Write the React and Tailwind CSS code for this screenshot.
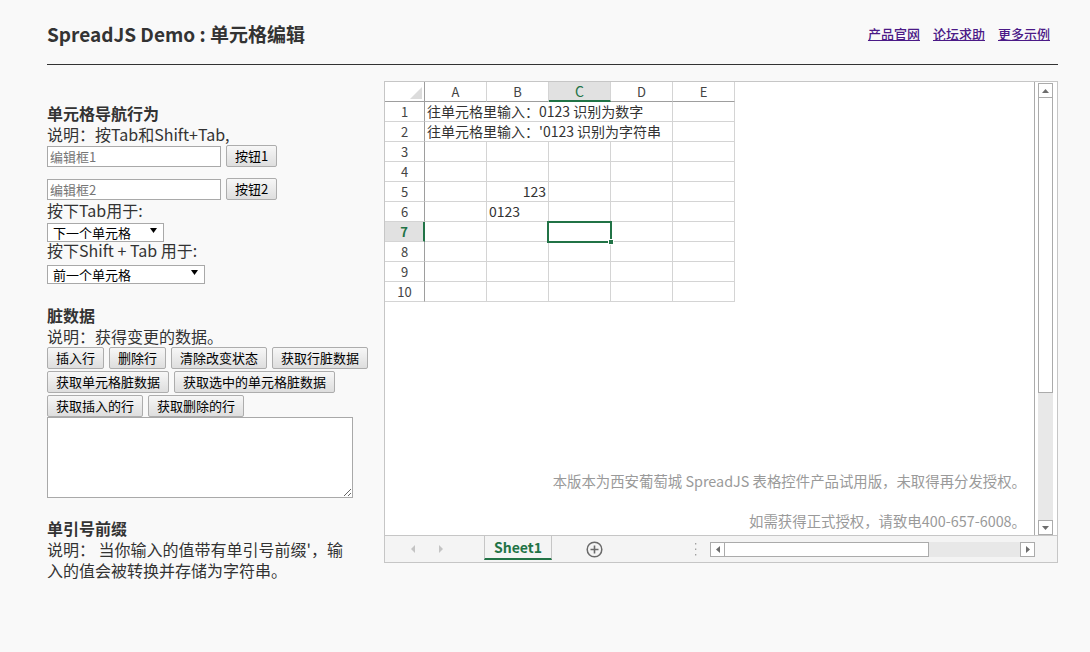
import React from 'react';

const COLS = ['A', 'B', 'C', 'D', 'E'];
const ROWS = [1, 2, 3, 4, 5, 6, 7, 8, 9, 10];

const Tri = ({ dir, color = '#6d6d6d', w = 7, h = 4 }) => {
    // small solid arrow used by scrollbars and selects
    const pts = {
        up: `0,${h} ${w / 2},0 ${w},${h}`,
        down: `0,0 ${w},0 ${w / 2},${h}`,
        left: `${h},0 ${h},${w} 0,${w / 2}`,
        right: `0,0 ${h},${w / 2} 0,${w}`,
    }[dir];
    const vw = dir === 'left' || dir === 'right' ? h : w;
    const vh = dir === 'left' || dir === 'right' ? w : h;
    return (
        <svg width={vw} height={vh} viewBox={`0 0 ${vw} ${vh}`}>
            <polygon points={pts} fill={color} />
        </svg>
    );
};

const Btn = ({ children }) => (
    <button className="h-[22px] px-[8px] border border-[#adadad] rounded-[2px] bg-linear-to-b from-[#f7f7f7] to-[#dedede] text-[13px] leading-[16px] text-black whitespace-nowrap">
        {children}
    </button>
);

const Select = ({ width, label }) => (
    <div className={`relative ${width} h-[19px]`}>
        <select className="appearance-none w-full h-full border border-[#a9a9a9] bg-white pl-[5px] text-[13px] leading-[17px] text-black outline-none">
            <option>{label}</option>
        </select>
        <span className="absolute right-[7px] top-[7px] pointer-events-none">
            <Tri dir="down" color="#000" w={7} h={5} />
        </span>
    </div>
);

const Sheet = () => {
    const cellText = {
        1: '往单元格里输入：0123 识别为数字',
        2: "往单元格里输入：'0123 识别为字符串",
    };
    return (
        <div className="w-[675px] h-[482px] border border-[#c6c6c6] bg-white flex flex-col">
            <div className="flex flex-1 min-h-0">
                {/* viewport */}
                <div className="relative flex-1 border-r border-[#ababab] text-[14px] text-[#333]">
                    <div className="flex h-[20px]">
                        <div className="w-[40px] h-[20px] border-r border-b border-[#9e9e9e] flex items-end justify-end p-[2px]">
                            <svg width="12" height="12" viewBox="0 0 12 12">
                                <polygon points="12,0 12,12 0,12" fill="#dcdcdc" />
                            </svg>
                        </div>
                        {COLS.map((c) =>
                            c === 'C' ? (
                                <div key={c} className="w-[62px] h-[20px] border-r border-[#d4d4d4] border-b-2 border-b-[#217346] bg-[#e1e1e1] flex items-center justify-center text-[#217346] text-[14px]">
                                    {c}
                                </div>
                            ) : (
                                <div key={c} className="w-[62px] h-[20px] border-r border-[#d4d4d4] border-b border-b-[#9e9e9e] flex items-center justify-center text-[#444] text-[13px]">
                                    {c}
                                </div>
                            )
                        )}
                    </div>
                    {ROWS.map((r) => (
                        <div key={r} className="flex h-[20px]">
                            {r === 7 ? (
                                <div className="w-[40px] h-[20px] border-b border-[#d4d4d4] border-r-2 border-r-[#217346] bg-[#e1e1e1] flex items-center justify-center text-[#217346] font-bold text-[13px]">
                                    {r}
                                </div>
                            ) : (
                                <div className="w-[40px] h-[20px] border-b border-[#d4d4d4] border-r border-r-[#9e9e9e] flex items-center justify-center text-[#444] text-[13px]">
                                    {r}
                                </div>
                            )}
                            {cellText[r] ? (
                                <>
                                    <div className="w-[248px] h-[20px] border-r border-b border-[#d4d4d4] flex items-center pl-[2px] whitespace-nowrap">
                                        {cellText[r]}
                                    </div>
                                    <div className="w-[62px] h-[20px] border-r border-b border-[#d4d4d4]" />
                                </>
                            ) : (
                                COLS.map((c) => (
                                    <div key={c} className="w-[62px] h-[20px] border-r border-b border-[#d4d4d4] flex items-center px-[2px]">
                                        {r === 5 && c === 'B' && <span className="ml-auto">123</span>}
                                        {r === 6 && c === 'B' && <span>0123</span>}
                                    </div>
                                ))
                            )}
                        </div>
                    ))}

                    {/* active cell C7 */}
                    <div className="absolute left-[162px] top-[139px] w-[65px] h-[22px] border-2 border-[#217346]">
                        <div className="absolute -right-[4px] -bottom-[4px] w-[6px] h-[6px] bg-[#217346] border border-white" />
                    </div>

                    <div className="absolute right-[8px] bottom-[4px] flex flex-col items-end gap-[20px] text-[14.4px] leading-[20px] text-[#9a9a9a]">
                        <div>本版本为西安葡萄城 SpreadJS 表格控件产品试用版，未取得再分发授权。</div>
                        <div>如需获得正式授权，请致电400-657-6008。</div>
                    </div>
                </div>

                {/* vertical scrollbar */}
                <div className="w-[22px] pl-[3px] pt-[1px] flex flex-col">
                    <div className="w-[15px] h-[15px] border border-[#ababab] bg-white flex items-center justify-center">
                        <Tri dir="up" />
                    </div>
                    <div className="w-[15px] h-[295px] border border-[#ababab] border-t-0 bg-white" />
                    <div className="w-[15px] flex-1 bg-[#e8e8e8]" />
                    <div className="w-[15px] h-[15px] border border-[#ababab] bg-white flex items-center justify-center">
                        <Tri dir="down" />
                    </div>
                </div>
            </div>

            {/* tab strip */}
            <div className="h-[27px] border-t border-[#c6c6c6] bg-[#f4f4f4] flex items-start">
                <div className="w-[99px] h-[26px] flex items-center pl-[26px] gap-[24px]">
                    <Tri dir="left" color="#c4c4c4" w={8} h={4} />
                    <Tri dir="right" color="#c4c4c4" w={8} h={4} />
                </div>
                <div className="w-[68px] h-[24px] border-x border-[#c6c6c6] border-b-2 border-b-[#217346] flex items-center justify-center text-[14px] font-bold text-[#217346]">
                    Sheet1
                </div>
                <div className="w-[85px] h-[26px] flex items-center justify-center">
                    <svg width="17" height="17" viewBox="0 0 17 17">
                        <circle cx="8.5" cy="8.5" r="7.3" fill="none" stroke="#6a6a6a" strokeWidth="1.5" />
                        <path d="M8.5 4.5v8M4.5 8.5h8" stroke="#6a6a6a" strokeWidth="1.6" />
                    </svg>
                </div>
                <div className="w-[73px] h-[26px] flex items-center justify-end pr-[13px]">
                    <svg width="3" height="13" viewBox="0 0 3 13">
                        <rect x="1" y="0" width="1.3" height="1.5" fill="#a0a0a0" />
                        <rect x="1" y="5.5" width="1.3" height="1.5" fill="#a0a0a0" />
                        <rect x="1" y="11" width="1.3" height="1.5" fill="#a0a0a0" />
                    </svg>
                </div>
                <div className="w-[325px] h-[15px] mt-[6px] flex">
                    <div className="w-[15px] h-[15px] border border-[#ababab] bg-white flex items-center justify-center">
                        <Tri dir="left" w={7} h={4} />
                    </div>
                    <div className="w-[204px] h-[15px] border border-[#ababab] border-l-0 bg-white" />
                    <div className="flex-1 h-[15px] bg-[#e8e8e8]" />
                    <div className="w-[15px] h-[15px] border border-[#ababab] bg-white flex items-center justify-center">
                        <Tri dir="right" w={7} h={4} />
                    </div>
                </div>
            </div>
        </div>
    );
};

export default function App() {
    return (
        <div className="min-h-screen bg-[#f9f9f9] font-['Noto_Sans_CJK_SC','Noto_Sans',sans-serif] text-[#333]">
            <div className="ml-[47px] w-[1011px]">
                <header className="flex items-center justify-between h-[65px] pt-[4px] border-b border-[#333]">
                    <h1 className="text-[19px] font-bold text-[#333]">SpreadJS Demo : 单元格编辑</h1>
                    <nav className="flex gap-[13px] pr-[8px] text-[13px] font-medium">
                        <a href="#" className="text-[#4b1a87] underline">产品官网</a>
                        <a href="#" className="text-[#4b1a87] underline">论坛求助</a>
                        <a href="#" className="text-[#4b1a87] underline">更多示例</a>
                    </nav>
                </header>

                <div className="flex mt-[16px]">
                    <div className="w-[337px] shrink-0 pt-[22px] text-[16px] leading-[21px]">
                        <h3 className="font-bold">单元格导航行为</h3>
                        <p>说明：按Tab和Shift+Tab,</p>
                        <div className="flex items-center gap-[5px]">
                            <input className="w-[174px] h-[21px] border border-[#a9a9a9] bg-white px-[2px] text-[13px] placeholder:text-[#757575]" placeholder="编辑框1" />
                            <Btn>按钮1</Btn>
                        </div>
                        <div className="flex items-center gap-[5px] mt-[11px]">
                            <input className="w-[174px] h-[21px] border border-[#a9a9a9] bg-white px-[2px] text-[13px] placeholder:text-[#757575]" placeholder="编辑框2" />
                            <Btn>按钮2</Btn>
                        </div>
                        <p>按下Tab用于:</p>
                        <Select width="w-[117px]" label="下一个单元格" />
                        <p>按下Shift + Tab 用于:</p>
                        <div className="mt-[2px]">
                            <Select width="w-[158px]" label="前一个单元格" />
                        </div>

                        <h3 className="font-bold mt-[23px]">脏数据</h3>
                        <p>说明：获得变更的数据。</p>
                        <div className="w-[330px] flex flex-wrap gap-x-[5px] gap-y-[2px]">
                            <Btn>插入行</Btn>
                            <Btn>删除行</Btn>
                            <Btn>清除改变状态</Btn>
                            <Btn>获取行脏数据</Btn>
                            <Btn>获取单元格脏数据</Btn>
                            <Btn>获取选中的单元格脏数据</Btn>
                            <Btn>获取插入的行</Btn>
                            <Btn>获取删除的行</Btn>
                        </div>
                        <textarea className="block w-[306px] h-[81px] border border-[#a9a9a9] bg-white" />

                        <h3 className="font-bold mt-[20px]">单引号前缀</h3>
                        <p className="w-[306px]">说明： 当你输入的值带有单引号前缀'，输入的值会被转换并存储为字符串。</p>
                    </div>
                    <Sheet />
                </div>
            </div>
        </div>
    );
}
